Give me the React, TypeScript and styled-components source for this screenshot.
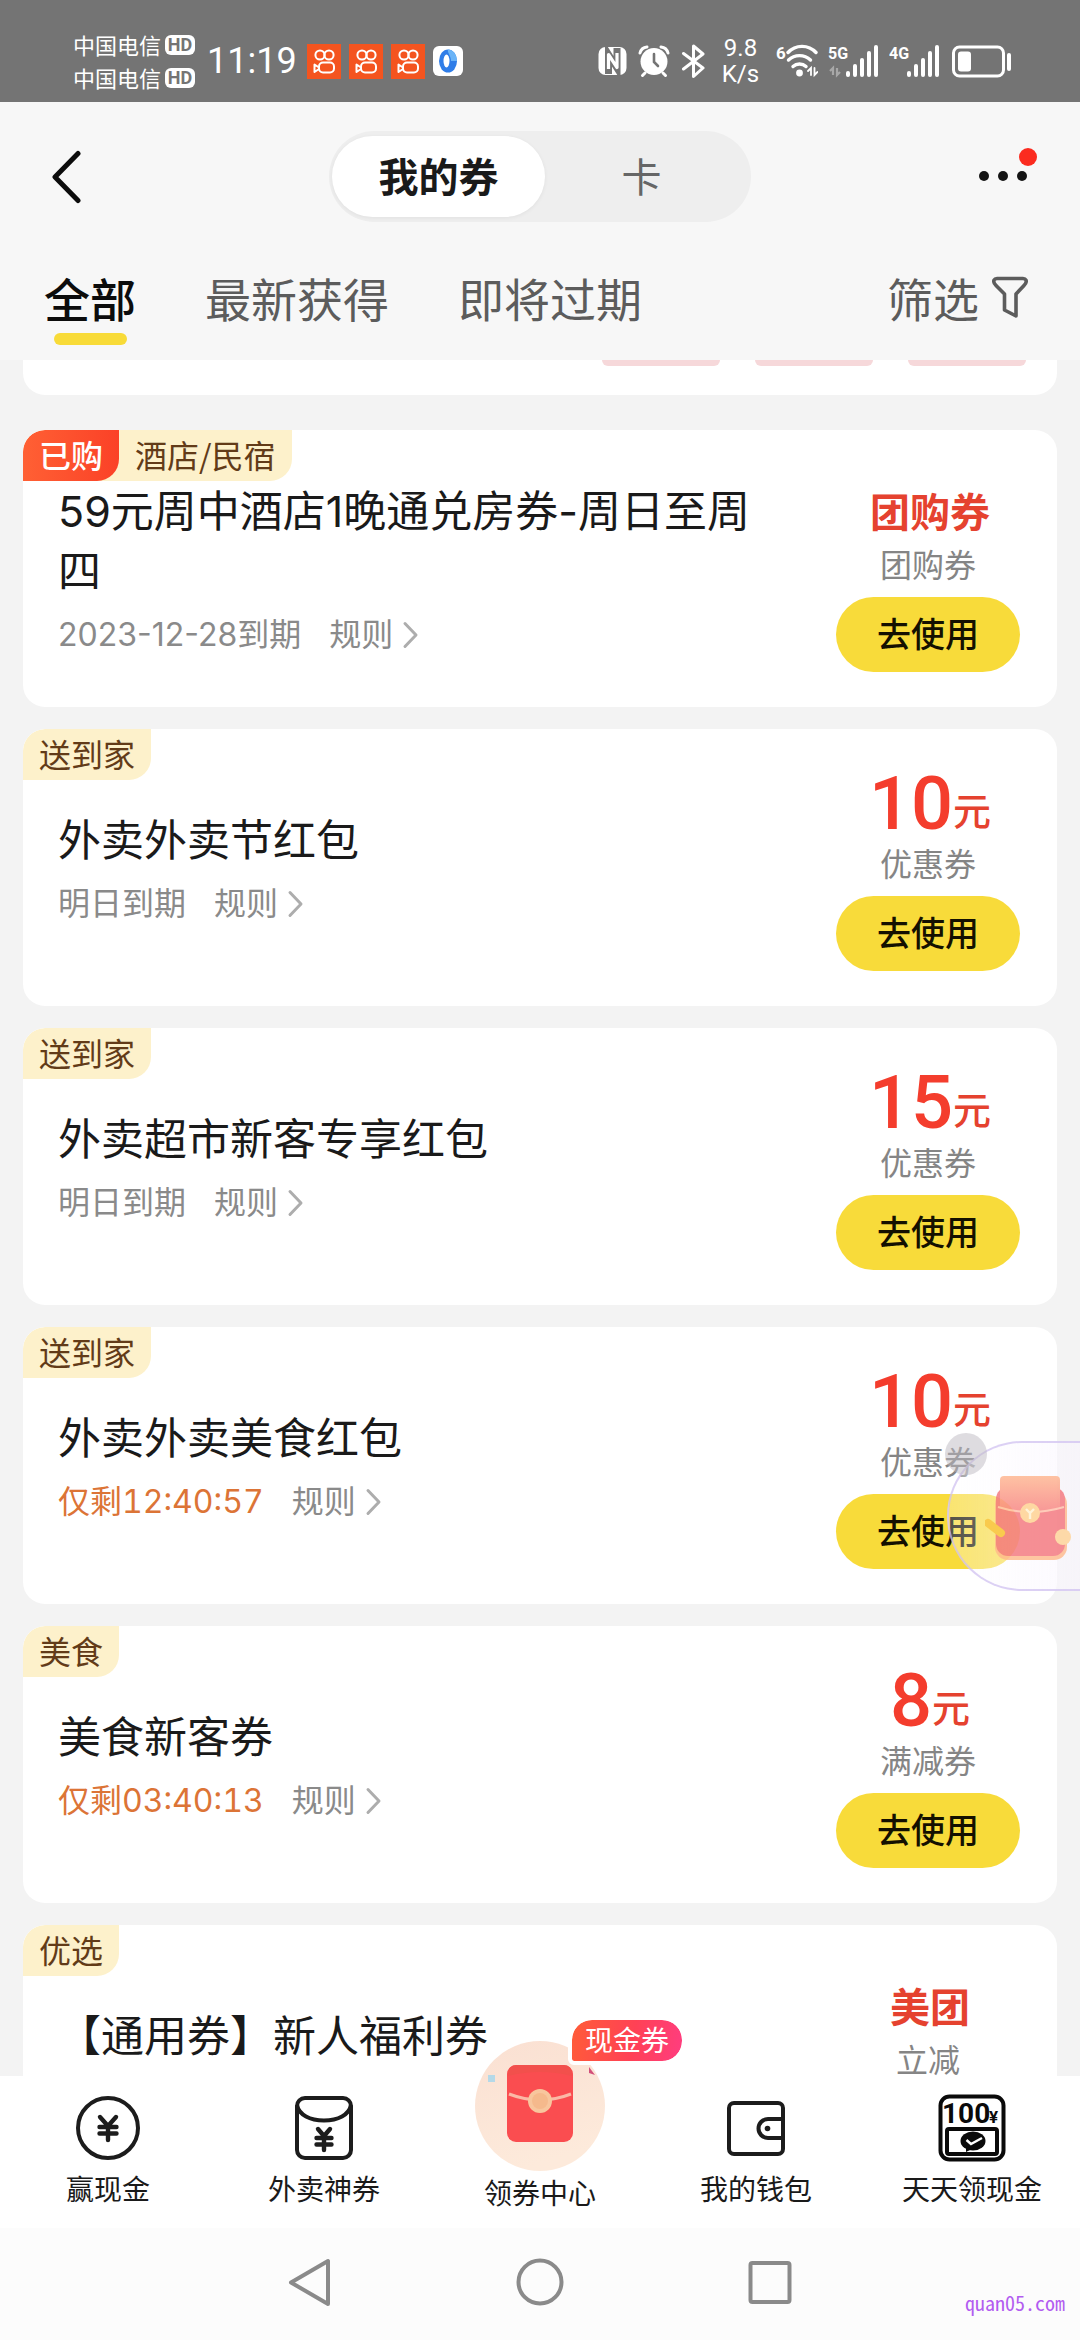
import React from "react";
import styled, { createGlobalStyle } from "styled-components";

const cjk = `"Noto Sans CJK SC", "Noto Sans", sans-serif`;
const mixed = `Inter, "Noto Sans CJK SC", sans-serif`;

const GlobalStyle = createGlobalStyle`
  *, *::before, *::after { box-sizing: border-box; }
  body { margin: 0; background: #f3f3f3; font-family: ${cjk}; color: #1a1a1a; }
  button { border: 0; padding: 0; margin: 0; background: none; font: inherit; color: inherit; cursor: pointer; }
  a { color: inherit; text-decoration: none; }
  ul, h2, p { margin: 0; padding: 0; list-style: none; font-weight: 400; }
  svg { display: block; flex: none; }
`;

const Page = styled.div`
  position: relative;
  display: flex;
  flex-direction: column;
  height: 100vh;
  overflow: hidden;
`;

/* ---------- status bar ---------- */

const StatusBar = styled.div`
  flex: none;
  display: flex;
  align-items: center;
  justify-content: space-between;
  height: 102px;
  padding: 20px 68px 0 73px;
  background: #747474;
  color: #fff;
`;

const StatusGroup = styled.div<{ $gap: number }>`
  display: flex;
  align-items: center;
  gap: ${(p) => p.$gap}px;
`;

const Carriers = styled.div`
  display: flex;
  flex-direction: column;
  font-size: 22px;
  line-height: 33px;
`;

const Carrier = styled.div`
  display: flex;
  align-items: center;
  gap: 4px;
`;

const HdBadge = styled.span`
  width: 30px;
  height: 20px;
  border-radius: 6px;
  background: #fff;
  color: #747474;
  font: 700 18px/20px Roboto, sans-serif;
  text-align: center;
`;

const Clock = styled.time`
  margin: 0 2px 0 4px;
  font: 400 36px/40px Roboto, sans-serif;
`;

const NetSpeed = styled.div`
  width: 51px;
  font: 400 24px/26px Roboto, sans-serif;
  text-align: center;
`;

/* ---------- header ---------- */

const Header = styled.header`
  flex: none;
  padding: 29px 44px 15px;
  background: #f7f7f7;
`;

const TitleRow = styled.div`
  display: grid;
  grid-template-columns: 1fr auto 1fr;
  align-items: center;
`;

const BackButton = styled.button`
  justify-self: start;
  padding: 0 8px;
`;

const MoreButton = styled.button`
  position: relative;
  justify-self: end;
  padding-right: 8px;
`;

const RedDot = styled.span`
  position: absolute;
  top: -2px;
  right: -1px;
  width: 18px;
  height: 18px;
  border-radius: 50%;
  background: #fb2b1f;
`;

const Switcher = styled.div`
  display: flex;
  padding: 5px 3px;
  border-radius: 46px;
  background: #eeeeee;
`;

const SwitchOption = styled.button<{ $active?: boolean }>`
  width: ${(p) => (p.$active ? 213 : 203)}px;
  height: 81px;
  padding: ${(p) => (p.$active ? "0 0 4px" : "0 10px 4px 0")};
  border-radius: 41px;
  background: ${(p) => (p.$active ? "#fff" : "transparent")};
  box-shadow: ${(p) => (p.$active ? "0 1px 4px rgba(0,0,0,0.06)" : "none")};
  color: ${(p) => (p.$active ? "#1a1a1a" : "#666")};
  font-size: 40px;
  font-weight: ${(p) => (p.$active ? 700 : 400)};
  line-height: 60px;
`;

const TabRow = styled.div`
  display: flex;
  align-items: flex-start;
  justify-content: space-between;
  margin-top: 45px;
`;

const Tabs = styled.nav`
  display: flex;
  gap: 69px;
`;

const Tab = styled.button<{ $active?: boolean }>`
  display: flex;
  flex-direction: column;
  align-items: center;
  gap: 6px;
  color: ${(p) => (p.$active ? "#0c0c0c" : "#5c5c5c")};
  font-size: 46px;
  font-weight: ${(p) => (p.$active ? 500 : 400)};
  line-height: 60px;

  &::after {
    content: "";
    width: 73px;
    height: 12px;
    border-radius: 6px;
    background: ${(p) => (p.$active ? "#f8db38" : "transparent")};
  }
`;

const FilterButton = styled.button`
  display: flex;
  align-items: center;
  gap: 13px;
  padding-right: 8px;
  color: #5c5c5c;
  font-size: 46px;
  line-height: 60px;
`;

/* ---------- coupons ---------- */

const CouponList = styled.ul`
  flex: 1;
  min-height: 0;
  display: flex;
  flex-direction: column;
  gap: 22px;
  padding: 0 23px;
  overflow: hidden;
`;

const CardTail = styled.li`
  flex: none;
  display: flex;
  justify-content: flex-end;
  gap: 35px;
  height: 35px;
  margin-bottom: 13px;
  padding-right: 31px;
  border-radius: 0 0 22px 22px;
  background: #fff;
`;

const TailPill = styled.span`
  width: 118px;
  height: 6px;
  border-radius: 0 0 16px 16px;
  background: #f6d8da;
`;

const Card = styled.li`
  position: relative;
  flex: none;
  display: flex;
  min-height: 277px;
  padding: 0 37px 0 35px;
  border-radius: 22px;
  background: #fff;
  overflow: hidden;
`;

const Tags = styled.div`
  position: absolute;
  top: 0;
  left: 0;
  display: flex;
  border-radius: 22px 0 22px 0;
  background: #fdf1cb;
  overflow: hidden;
`;

const Tag = styled.span<{ $bought?: boolean }>`
  height: 51px;
  padding: 0 16px;
  border-radius: 0 0 22px 0;
  background: ${(p) => (p.$bought ? "linear-gradient(90deg, #ff6034, #fb4127)" : "transparent")};
  color: ${(p) => (p.$bought ? "#fff" : "#623b18")};
  font-size: 32px;
  font-weight: ${(p) => (p.$bought ? 500 : 400)};
  line-height: 48px;
`;

const Info = styled.div`
  flex: 1;
  display: flex;
  flex-direction: column;
  justify-content: center;
  gap: 12px;
  padding-right: 50px;
`;

const CouponTitle = styled.h2`
  font-family: ${mixed};
  font-size: 43px;
  line-height: 60px;
`;

const Meta = styled.div`
  display: flex;
  align-items: center;
  gap: 28px;
  min-height: 44px;
  color: #8a8a8a;
  font-family: ${mixed};
  font-size: 32px;
  line-height: 44px;
`;

const Expiry = styled.span<{ $urgent?: boolean }>`
  color: ${(p) => (p.$urgent ? "#dc7436" : "inherit")};
  font-variant-numeric: ${(p) => (p.$urgent ? "tabular-nums" : "normal")};
`;

const RulesButton = styled.button`
  display: flex;
  align-items: center;
  gap: 8px;
`;

const Offer = styled.div`
  flex: none;
  display: flex;
  flex-direction: column;
  align-items: center;
  width: 184px;
  padding-top: 33px;
`;

const Price = styled.div`
  display: flex;
  align-items: flex-end;
  height: 78px;
  padding-left: 4px;
`;

const PriceAmount = styled.span`
  color: #f43d2d;
  font: 500 74px/72px Roboto, sans-serif;
`;

const PriceWord = styled.span<{ $unit?: boolean }>`
  color: #e5422f;
  font-size: ${(p) => (p.$unit ? 38 : 40)}px;
  font-weight: ${(p) => (p.$unit ? 500 : 700)};
  line-height: 62px;
`;

const OfferKind = styled.p`
  color: #858585;
  font-size: 32px;
  line-height: 44px;
`;

const UseButton = styled.button`
  align-self: stretch;
  height: 75px;
  margin-top: 12px;
  padding-bottom: 3px;
  border-radius: 38px;
  background: #f8db3a;
  color: #141000;
  font-size: 34px;
  font-weight: 500;
  line-height: 60px;
`;

/* ---------- floating promo ---------- */

const Promo = styled.button`
  position: absolute;
  z-index: 1;
  top: 1441px;
  right: 0;
  width: 133px;
  height: 150px;
  padding: 4px 0 0 36px;
  border: 2px solid rgba(205, 190, 240, 0.7);
  border-right: 0;
  border-radius: 75px 0 0 75px;
  background: linear-gradient(90deg, rgba(255, 255, 255, 0.28), rgba(250, 246, 255, 0.6));
`;

const PromoClose = styled.span`
  position: absolute;
  top: -10px;
  left: -4px;
  width: 42px;
  height: 42px;
  border-radius: 50%;
  background: rgba(190, 186, 194, 0.5);
`;

/* ---------- bottom bars ---------- */

const BottomNav = styled.nav`
  position: relative;
  flex: none;
  display: grid;
  grid-template-columns: repeat(5, 1fr);
  height: 152px;
  padding-top: 18px;
  background: #fff;
`;

const NavItem = styled.a<{ $featured?: boolean }>`
  position: relative;
  display: flex;
  flex-direction: column;
  align-items: center;
  gap: ${(p) => (p.$featured ? 3 : 8)}px;
  margin-top: ${(p) => (p.$featured ? -53 : 0)}px;
  font-size: 28px;
  line-height: 36px;
  white-space: nowrap;
`;

const NavBadge = styled.span`
  position: absolute;
  top: -25px;
  left: calc(50% + 28px);
  height: 49px;
  padding: 0 13px;
  border: 4px solid #fff;
  border-radius: 24px 24px 24px 6px;
  background: linear-gradient(100deg, #ff5c38, #ff4155 55%, #ff3d80) padding-box;
  color: #fff;
  line-height: 38px;
`;

const SystemBar = styled.div`
  position: relative;
  flex: none;
  display: flex;
  align-items: center;
  justify-content: center;
  gap: 182px;
  height: 112px;
  padding-bottom: 4px;
  background: #fcfcfc;
`;

const Watermark = styled.span`
  position: absolute;
  right: 15px;
  bottom: 22px;
  color: #b25cf0;
  font: 400 20px/30px "Noto Sans Mono CJK SC", "Liberation Mono", monospace;
`;

/* ---------- icons ---------- */

const KwaiIcon = () => (
  <svg width="34" height="35" viewBox="0 0 34 35" fill="none" stroke="#fff" strokeWidth="2">
    <rect width="34" height="35" fill="#f4541f" stroke="none" />
    <circle cx="13" cy="11" r="4.6" />
    <circle cx="22" cy="11" r="4.6" />
    <rect x="12" y="18.500" width="15" height="10" rx="4" />
    <path d="M12 23.500 L7.500 20.500 V28 L12 25" strokeLinejoin="round" />
  </svg>
);

const BrowserIcon = () => (
  <svg width="30" height="30" viewBox="0 0 30 30">
    <rect width="30" height="30" rx="6" fill="#fff" />
    <ellipse cx="15" cy="15" rx="9" ry="11.500" fill="#2f7de8" />
    <path d="M15 3.500c5 0 9 5 9 11.500h-6c0-6-4-8-3-11.500z" fill="#6bb4f7" />
    <ellipse cx="13.500" cy="15" rx="3" ry="6.500" fill="#fff" />
  </svg>
);

const NfcIcon = () => (
  <svg width="29" height="36" viewBox="0 0 29 36" fill="none">
    <rect x="0.500" y="4" width="28" height="28" rx="7" fill="#fff" />
    <path d="M10.500 31V11.500L19 25V5" stroke="#747474" strokeWidth="7" />
    <path d="M10.500 26V11.500L19 24.500V10" stroke="#fff" strokeWidth="3.200" strokeLinejoin="round" />
  </svg>
);

const AlarmIcon = () => (
  <svg width="34" height="36" viewBox="0 0 34 36" fill="none" stroke="#fff" strokeLinecap="round">
    <circle cx="17" cy="18.500" r="13.500" fill="#fff" stroke="none" />
    <path d="M3 10a8 8 0 0 1 7-6M31 10a8 8 0 0 0-7-6" strokeWidth="3" />
    <path d="M8 30l-2.500 2.500M26 30l2.500 2.500" strokeWidth="3" />
    <path d="M17 11v8l4 4" stroke="#747474" strokeWidth="2.600" />
  </svg>
);

const BluetoothIcon = () => (
  <svg width="24" height="36" viewBox="0 0 24 36" fill="none" stroke="#fff" strokeWidth="3" strokeLinejoin="round" strokeLinecap="round">
    <path d="M2.500 10.500L22 25l-9.500 8.500V3L22 11 2.500 26" />
  </svg>
);

const WifiIcon = () => (
  <svg width="42" height="36" viewBox="0 0 42 36" fill="none" stroke="#fff" strokeWidth="3.400" strokeLinecap="round">
    <text x="0" y="16" fill="#fff" stroke="none" fontFamily="Roboto, sans-serif" fontSize="17" fontWeight="700">6</text>
    <path d="M12 9.500a19 19 0 0 1 28 0" />
    <path d="M12.500 17a16 16 0 0 1 22 0" />
    <path d="M17 23.500a9.500 9.500 0 0 1 13 0" />
    <circle cx="23.500" cy="30" r="3.400" fill="#fff" stroke="none" />
    <path d="M35 32v-7l-3 3M38.500 25v7l3-3" strokeWidth="1.800" />
  </svg>
);

const SignalIcon = ({ label, dim }: { label: string; dim?: boolean }) => (
  <svg width="51" height="36" viewBox="0 0 51 36" fill="#fff">
    <text x="0" y="16" fontFamily="Roboto, sans-serif" fontSize="16" fontWeight="700">{label}</text>
    {dim && <path d="M5 32v-7l-3 3M9 25v7l3-3" fill="none" stroke="#a8a8a8" strokeWidth="2.200" />}
    {[6, 13, 19, 26, 32].map((h, i) => (
      <rect key={h} x={18 + i * 7} y={34 - h} width="4" height={h} rx="2" />
    ))}
  </svg>
);

const BatteryIcon = () => (
  <svg width="62" height="36" viewBox="0 0 62 36" fill="#fff">
    <rect x="3.500" y="4" width="50" height="29" rx="6" fill="none" stroke="#fff" strokeWidth="3" />
    <rect x="8" y="8.500" width="13" height="20" rx="3" />
    <rect x="57" y="10" width="4" height="18" rx="2" />
  </svg>
);

const BackIcon = () => (
  <svg width="30" height="54" viewBox="0 0 30 54" fill="none" stroke="#0c0c0c" strokeWidth="5" strokeLinecap="round" strokeLinejoin="round">
    <path d="M26 3.500L3 27l23 23.500" />
  </svg>
);

const MoreIcon = () => (
  <svg width="49" height="54" viewBox="0 0 49 54" fill="#141414">
    {[5, 24, 43].map((x) => (
      <circle key={x} cx={x} cy="26" r="5" />
    ))}
  </svg>
);

const FunnelIcon = () => (
  <svg width="36" height="44" viewBox="0 0 36 44" fill="none" stroke="#5c5c5c" strokeWidth="3.600" strokeLinejoin="round">
    <path d="M5 3.500h26c3 0 4 2.500 2.500 5L32 10.500 24 19v22L12.500 35V19L4 10.500 2.500 8.500C1 6 2 3.500 5 3.500z" />
  </svg>
);

const ChevronIcon = () => (
  <svg width="18" height="28" viewBox="0 0 18 28" fill="none" stroke="#adadad" strokeWidth="3" strokeLinecap="round" strokeLinejoin="round">
    <path d="M4 2.500L15 14 4 25.500" />
  </svg>
);

const YenStroke = ({ d }: { d: string }) => <path d={d} strokeWidth="4.400" strokeLinecap="round" />;

const CashIcon = () => (
  <svg width="68" height="68" viewBox="0 0 68 68" fill="none" stroke="#1c1c1c" strokeWidth="4">
    <circle cx="34" cy="34" r="30" />
    <YenStroke d="M26 23l8 9 8-9M34 32v14M25.500 33h17M25.500 39.500h17" />
  </svg>
);

const CouponEnvelopeIcon = () => (
  <svg width="68" height="68" viewBox="0 0 68 68" fill="none" stroke="#1c1c1c" strokeWidth="4">
    <rect x="7" y="4" width="54" height="60" rx="8" />
    <path d="M7 11c2 10 13 15.500 27 15.500S59 21 61 11" />
    <YenStroke d="M28 35l6 7 6-7M34 42v14M26.500 44h15M26.500 50.500h15" />
  </svg>
);

const WalletIcon = () => (
  <svg width="68" height="68" viewBox="0 0 68 68" fill="none" stroke="#1c1c1c" strokeWidth="4">
    <rect x="7" y="9" width="54" height="51" rx="5" />
    <path d="M61 25H46a9.500 9.500 0 0 0 0 19h15" />
    <circle cx="45.500" cy="34.500" r="2.800" fill="#1c1c1c" stroke="none" />
  </svg>
);

const HundredIcon = () => (
  <svg width="68" height="68" viewBox="0 0 68 68" fill="none" stroke="#0a0a0a" strokeWidth="4">
    <rect x="2.500" y="2.500" width="63" height="63" rx="9" />
    <text x="4" y="29" fill="#0a0a0a" stroke="none" fontFamily="Roboto, sans-serif" fontSize="28" fontWeight="700">100</text>
    <text x="51" y="29" fill="#0a0a0a" stroke="none" fontFamily="Roboto, sans-serif" fontSize="17" fontWeight="700">¥</text>
    <rect x="9" y="35" width="50" height="25" rx="2" />
    <ellipse cx="35" cy="47" rx="12.500" ry="9.500" fill="#0a0a0a" stroke="none" />
    <path d="M28 53v5l6-3z" fill="#0a0a0a" stroke="none" />
    <path d="M28.500 46l4.500 4 11-6" stroke="#fff" strokeWidth="2.400" />
  </svg>
);

const RedPacketIcon = () => (
  <svg width="130" height="130" viewBox="0 0 130 130">
    <defs>
      <linearGradient id="packetDisc" x1="0" y1="0" x2="0.300" y2="1">
        <stop offset="0" stopColor="#fae0d2" />
        <stop offset="1" stopColor="#fdeadb" />
      </linearGradient>
    </defs>
    <circle cx="65" cy="65" r="65" fill="url(#packetDisc)" />
    <rect x="13" y="34" width="7" height="7" fill="#b5d9e8" />
    <path d="M114 26l6 8-6-2z" fill="#d2507a" />
    <rect x="32" y="24" width="66" height="77" rx="9" fill="#fa4d50" />
    <path d="M33 33q0-9 9-9h46q9 0 9 9v2q-32-8-64 0z" fill="#f2504c" />
    <path d="M34 53q31 12 62 0" fill="none" stroke="#fbb9a6" strokeWidth="3" />
    <circle cx="65" cy="60" r="12" fill="#f8c69d" />
    <circle cx="65" cy="60" r="8" fill="#f5b98c" />
  </svg>
);

const PromoPacketIcon = () => (
  <svg width="87" height="90" viewBox="0 0 87 90" opacity="0.8">
    <defs>
      <linearGradient id="promoFlap" x1="0" y1="0" x2="0" y2="1">
        <stop offset="0" stopColor="#ffb48c" />
        <stop offset="1" stopColor="#f77c7c" />
      </linearGradient>
    </defs>
    <rect x="10" y="18" width="72" height="69" rx="13" fill="#ffb98a" />
    <rect x="11" y="14" width="69" height="69" rx="12" fill="#f4747a" />
    <path d="M15 7q0-4 4-4h52q4 0 4 4v27q-30 14-60 0z" fill="url(#promoFlap)" />
    <path d="M13 34q32 10 66 0" fill="none" stroke="#ffc0a8" strokeWidth="2" />
    <circle cx="45" cy="40" r="10" fill="#ffd08c" />
    <path d="M41 36l4 4 4-4M45 40v6" fill="none" stroke="#fff2d0" strokeWidth="2.400" />
    <path d="M3 50l13 10" stroke="#f9c440" strokeWidth="8" strokeLinecap="round" />
    <ellipse cx="78" cy="64" rx="8" ry="8" fill="#ffd394" />
  </svg>
);

/* ---------- data ---------- */

type Coupon = {
  bought?: string;
  tag: string;
  title: string;
  expiry?: string;
  urgent?: boolean;
  amount?: string;
  word: string;
  kind: string;
};

const coupons: Coupon[] = [
  { bought: "已购", tag: "酒店/民宿", title: "59元周中酒店1晚通兑房券-周日至周四", expiry: "2023-12-28到期", word: "团购券", kind: "团购券" },
  { tag: "送到家", title: "外卖外卖节红包", expiry: "明日到期", amount: "10", word: "元", kind: "优惠券" },
  { tag: "送到家", title: "外卖超市新客专享红包", expiry: "明日到期", amount: "15", word: "元", kind: "优惠券" },
  { tag: "送到家", title: "外卖外卖美食红包", expiry: "仅剩12:40:57", urgent: true, amount: "10", word: "元", kind: "优惠券" },
  { tag: "美食", title: "美食新客券", expiry: "仅剩03:40:13", urgent: true, amount: "8", word: "元", kind: "满减券" },
  { tag: "优选", title: "【通用券】新人福利券", word: "美团", kind: "立减" },
];

const CouponCard = ({ coupon }: { coupon: Coupon }) => (
  <Card>
    <Tags>
      {coupon.bought && <Tag $bought>{coupon.bought}</Tag>}
      <Tag>{coupon.tag}</Tag>
    </Tags>
    <Info>
      <CouponTitle>{coupon.title}</CouponTitle>
      <Meta>
        {coupon.expiry && (
          <>
            <Expiry $urgent={coupon.urgent}>{coupon.expiry}</Expiry>
            <RulesButton type="button">
              规则
              <ChevronIcon />
            </RulesButton>
          </>
        )}
      </Meta>
    </Info>
    <Offer>
      <Price>
        {coupon.amount && <PriceAmount>{coupon.amount}</PriceAmount>}
        <PriceWord $unit={Boolean(coupon.amount)}>{coupon.word}</PriceWord>
      </Price>
      <OfferKind>{coupon.kind}</OfferKind>
      {coupon.expiry && <UseButton type="button">去使用</UseButton>}
    </Offer>
  </Card>
);

export default function App() {
  return (
    <>
      <GlobalStyle />
      <Page>
        <StatusBar>
          <StatusGroup $gap={8}>
            <Carriers>
              <Carrier>中国电信<HdBadge>HD</HdBadge></Carrier>
              <Carrier>中国电信<HdBadge>HD</HdBadge></Carrier>
            </Carriers>
            <Clock>11:19</Clock>
            <KwaiIcon />
            <KwaiIcon />
            <KwaiIcon />
            <BrowserIcon />
          </StatusGroup>
          <StatusGroup $gap={10}>
            <NfcIcon />
            <AlarmIcon />
            <BluetoothIcon />
            <NetSpeed>9.8<br />K/s</NetSpeed>
            <WifiIcon />
            <SignalIcon label="5G" dim />
            <SignalIcon label="4G" />
            <BatteryIcon />
          </StatusGroup>
        </StatusBar>

        <Header>
          <TitleRow>
            <BackButton type="button" aria-label="返回"><BackIcon /></BackButton>
            <Switcher>
              <SwitchOption type="button" $active>我的券</SwitchOption>
              <SwitchOption type="button">卡</SwitchOption>
            </Switcher>
            <MoreButton type="button" aria-label="更多"><MoreIcon /><RedDot /></MoreButton>
          </TitleRow>
          <TabRow>
            <Tabs>
              <Tab type="button" $active>全部</Tab>
              <Tab type="button">最新获得</Tab>
              <Tab type="button">即将过期</Tab>
            </Tabs>
            <FilterButton type="button">筛选<FunnelIcon /></FilterButton>
          </TabRow>
        </Header>

        <CouponList>
          <CardTail><TailPill /><TailPill /><TailPill /></CardTail>
          {coupons.map((coupon) => (
            <CouponCard key={coupon.title} coupon={coupon} />
          ))}
        </CouponList>

        <Promo type="button" aria-label="红包"><PromoClose /><PromoPacketIcon /></Promo>

        <BottomNav>
          <NavItem href="#cash"><CashIcon />赢现金</NavItem>
          <NavItem href="#takeaway"><CouponEnvelopeIcon />外卖神券</NavItem>
          <NavItem href="#center" $featured>
            <RedPacketIcon />
            领券中心
            <NavBadge>现金券</NavBadge>
          </NavItem>
          <NavItem href="#wallet"><WalletIcon />我的钱包</NavItem>
          <NavItem href="#daily"><HundredIcon />天天领现金</NavItem>
        </BottomNav>

        <SystemBar>
          <button type="button" aria-label="后退">
            <svg width="48" height="48" viewBox="0 0 48 48" fill="none" stroke="#8a8a8a" strokeWidth="4" strokeLinejoin="round">
              <path d="M42 3v43L5 24.500z" />
            </svg>
          </button>
          <button type="button" aria-label="主屏幕">
            <svg width="48" height="48" viewBox="0 0 48 48" fill="none" stroke="#8a8a8a" strokeWidth="4">
              <circle cx="24" cy="24" r="21.500" />
            </svg>
          </button>
          <button type="button" aria-label="最近任务">
            <svg width="48" height="48" viewBox="0 0 48 48" fill="none" stroke="#8a8a8a" strokeWidth="4">
              <rect x="4.500" y="5" width="39" height="39" rx="2" />
            </svg>
          </button>
          <Watermark>quan05.com</Watermark>
        </SystemBar>
      </Page>
    </>
  );
}
